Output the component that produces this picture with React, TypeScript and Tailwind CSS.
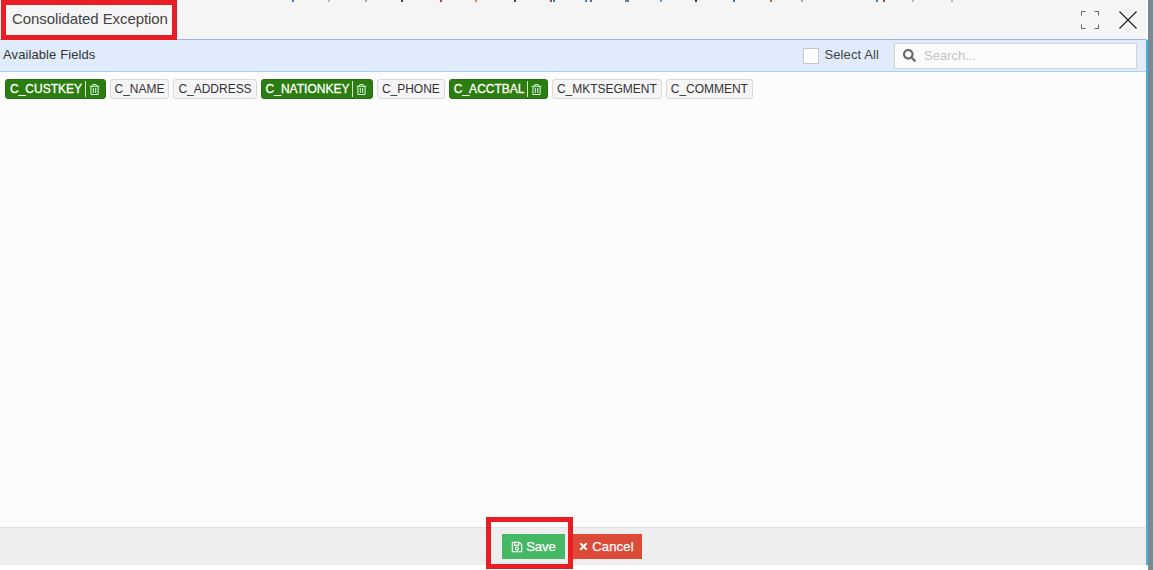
import { FaRegSave, FaRegTrashAlt, FaSearch, FaTimes } from "react-icons/fa";

const fields = [
  { name: "C_CUSTKEY", on: true },
  { name: "C_NAME", on: false },
  { name: "C_ADDRESS", on: false },
  { name: "C_NATIONKEY", on: true },
  { name: "C_PHONE", on: false },
  { name: "C_ACCTBAL", on: true },
  { name: "C_MKTSEGMENT", on: false },
  { name: "C_COMMENT", on: false },
];

// stray pixels from the page behind the dialog
const specks = [
  { x: 292, c: "#2f7fd8" },
  { x: 328, c: "#bbbbbb" },
  { x: 365, c: "#aaaaaa" },
  { x: 401, c: "#444444" },
  { x: 440, c: "#a04060" },
  { x: 475, c: "#d09040" },
  { x: 514, c: "#554422" },
  { x: 550, c: "#b04040" },
  { x: 553, c: "#3080d0" },
  { x: 585, c: "#3080d0" },
  { x: 590, c: "#666688" },
  { x: 625, c: "#888888" },
  { x: 627, c: "#3080d0" },
  { x: 660, c: "#60a0d0" },
  { x: 695, c: "#333333" },
  { x: 733, c: "#3070c0" },
  { x: 770, c: "#b07030" },
  { x: 801, c: "#aaaaaa" },
  { x: 876, c: "#2f7fd8" },
  { x: 883, c: "#c04030" },
  { x: 912, c: "#bbbbbb" },
  { x: 951, c: "#bbbbbb" },
];

function Chip({ name, on }: { name: string; on: boolean }) {
  if (on) {
    return (
      <div className="flex h-5 items-center rounded-[3px] border border-[#27700f] bg-[#2b7d10] pl-[4px] pr-[4.5px] text-xs text-white">
        <span className="[-webkit-text-stroke:0.3px_white]">{name}</span>
        <span className="mx-[3px] h-4 w-px bg-[#d5e6cd]" />
        <FaRegTrashAlt size={11} className="text-[#d6f5e0]" />
      </div>
    );
  }
  return (
    <div className="flex h-5 items-center rounded-[3px] border border-[#d9d9d9] bg-[#f5f5f5] px-[4px] text-xs tracking-[-0.02px] text-[#333]">
      {name}
    </div>
  );
}

function FullscreenIcon() {
  return (
    <svg width="18" height="18" viewBox="0 0 18 18" fill="none" stroke="#666" strokeWidth="1">
      <path d="M.5 4.5V.5H4.5M13.5.5H17.5V4.5M17.5 13.5V17.5H13.5M4.5 17.5H.5V13.5" />
    </svg>
  );
}

function CloseIcon() {
  return (
    <svg width="18" height="18" viewBox="0 0 18 18" fill="none" stroke="#222" strokeWidth="1.2">
      <path d="M.5.5 17.5 17.5M17.5.5 .5 17.5" />
    </svg>
  );
}

export default function App() {
  return (
    <div className="relative flex h-[570px] w-[1153px] flex-col overflow-hidden bg-white font-['Liberation_Sans',sans-serif] text-[#333]">
      <div className="mb-[5px] mr-[5px] flex min-h-0 flex-1 flex-col">
        <header className="flex h-10 shrink-0 items-center justify-between border-b border-r-[2px] border-b-[#9db8e0] border-r-[#fafafa] bg-[#f5f5f5] pl-3 pr-[9px]">
          <span className="text-[15px] tracking-[-0.08px] text-[#444]">Consolidated Exception</span>
          <div className="flex items-center gap-5">
            <FullscreenIcon />
            <CloseIcon />
          </div>
        </header>
        <div className="flex min-h-0 flex-1 flex-col border-r-[2px] border-[#3fb4dc]">
          <div className="flex h-8 shrink-0 items-center justify-between border-b border-[#a9cdee] bg-[#e0ecfb] pl-[3px] pr-[9px]">
            <span className="mb-[2px] text-[13px] tracking-[0.1px] text-[#333]">Available Fields</span>
            <div className="flex items-center">
              <span className="h-4 w-4 border border-[#c8c8c8] bg-white" />
              <span className="mb-[1px] ml-[6px] text-[13px] tracking-[0.1px] text-[#444]">Select All</span>
              <div className="ml-[15px] flex h-[26px] w-[243px] items-center gap-2 border border-[#d4d4d4] bg-[#fbfbfb] pl-2">
                <FaSearch size={13} className="text-[#666]" />
                <span className="text-[13px] text-[#c4c4c4]">Search...</span>
              </div>
            </div>
          </div>
          <main className="flex flex-1 items-start gap-1 bg-[#fcfcfc] pl-[5px] pt-[7px]">
            {fields.map((f) => (
              <Chip key={f.name} name={f.name} on={f.on} />
            ))}
          </main>
          <footer className="flex h-[38px] shrink-0 items-center justify-center border-t border-[#e2e2e2] bg-[#eeeeee] pr-[2px]">
            <button className="flex h-[25px] w-[63px] items-center justify-center gap-[3px] bg-[#45b865] text-[13px] text-white [-webkit-text-stroke:0.25px_white]">
              <FaRegSave size={12} />
              Save
            </button>
            <button className="ml-[5px] flex h-[25px] w-[72px] items-center justify-center gap-[3px] bg-[#dc4a38] text-[13px] tracking-[0.2px] text-white [-webkit-text-stroke:0.25px_white]">
              <FaTimes size={11} />
              Cancel
            </button>
          </footer>
        </div>
      </div>
      <div className="absolute bottom-0 right-0 top-0 w-[5px] bg-[#7d8790]" />
      {specks.map((s) => (
        <span
          key={s.x}
          className="absolute top-0 h-[2px] w-[2px]"
          style={{ left: s.x, backgroundColor: s.c }}
        />
      ))}
      {/* red annotation boxes drawn over the screenshot */}
      <div className="absolute left-[1px] top-0 h-[40px] w-[176px] border-[5px] border-[#ea1c24]" />
      <div className="absolute left-[486px] top-[517px] h-[52px] w-[87px] border-[5px] border-[#ea1c24]" />
    </div>
  );
}
